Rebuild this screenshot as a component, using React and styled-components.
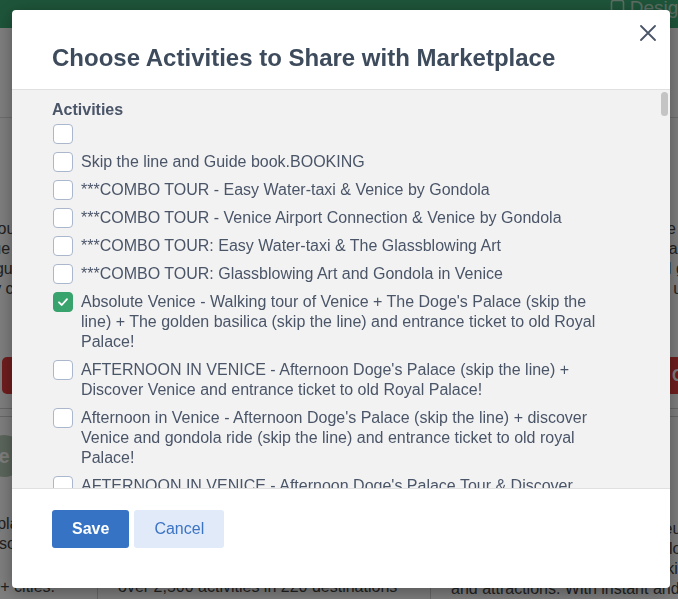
import React, { useState } from "react";
import styled, { createGlobalStyle } from "styled-components";

const GlobalStyle = createGlobalStyle`
  html, body {
    margin: 0;
    padding: 0;
    height: 599px;
    overflow: hidden;
    background: #ffffff;
    font-family: "Liberation Sans", Arial, Helvetica, sans-serif;
  }
  * { box-sizing: border-box; }
`;

/* ---------- page behind the modal ---------- */

const Page = styled.div`
  width: 678px;
  height: 599px;
  overflow: hidden;
  background: #ffffff;
`;

const TopBar = styled.header`
  height: 28px;
  background: #3caa74;
  display: flex;
  justify-content: flex-end;
  align-items: flex-start;
  overflow: hidden;
`;

const TopLink = styled.a`
  display: flex;
  align-items: center;
  gap: 4px;
  color: #b9dcc8;
  font-size: 19px;
  line-height: 20px;
  white-space: nowrap;
  margin-right: -70px;
  margin-top: -2px;
`;

const Hero = styled.div`
  height: 90px;
  border-bottom: 1px solid #dcdcdc;
`;

const CardRow = styled.div`
  display: grid;
  grid-template-columns: 297px 333px 400px;
  margin-left: -200px;
  height: 291px;
  border-bottom: 1px solid #d0d0d0;
`;

const Card = styled.div`
  display: flex;
  flex-direction: column;
  padding: ${(p) => (p.$first ? "24px 7px 14px 202px" : "24px 20px 14px 20px")};
  color: #333;
`;

const CardTitle = styled.div`
  font-size: 20px;
  font-weight: bold;
  margin-bottom: 54px;
  margin-left: ${(p) => p.$shift || 0}px;
`;

const CardText = styled.p`
  margin: 0;
  font-size: 16px;
  line-height: 20px;
  color: #444;
  margin-left: ${(p) => p.$shift || 0}px;
`;

const RedButton = styled.div`
  margin-top: auto;
  height: 37px;
  border-radius: 5px;
  background: #e23c3c;
  color: #fff;
  font-size: 16px;
  font-weight: bold;
  display: flex;
  align-items: center;
  padding-left: ${(p) => (p.$right ? "222px" : "12px")};
`;

const Gap = styled.div`
  height: 8px;
  border-bottom: 1px solid #d0d0d0;
`;

const FeatureRow = styled.div`
  display: grid;
  grid-template-columns: 297px 333px 400px;
  margin-left: -200px;
  height: 200px;
`;

const Feature = styled.div`
  display: flex;
  flex-direction: column;
  align-items: ${(p) => (p.$first ? "flex-end" : "flex-start")};
  padding: ${(p) => (p.$first ? "18px 42px 0 0" : "18px 20px 0 20px")};
  border-left: ${(p) => (p.$first ? "none" : "1px solid #d0d0d0")};
  color: #444;
  font-size: 16px;
  line-height: 20px;
`;

const Avatar = styled.div`
  width: 42px;
  height: 42px;
  border-radius: 50%;
  background: #b6ccb8;
  margin-right: ${(p) => p.$right || 0}px;
  margin-bottom: ${(p) => p.$gap || 37}px;
  display: flex;
  align-items: center;
  justify-content: center;
  color: #fff;
  font-weight: bold;
  font-size: 20px;
`;

const FeatureText = styled.p`
  margin: 0;
  margin-top: ${(p) => p.$top || 0}px;
  white-space: nowrap;
`;

/* ---------- modal ---------- */

const Backdrop = styled.div`
  position: fixed;
  inset: 0;
  background: rgba(0, 0, 0, 0.5);
`;

const Modal = styled.div`
  position: fixed;
  top: 10px;
  left: 12px;
  width: 658px;
  height: 578px;
  background: #ffffff;
  border-radius: 4px;
  box-shadow: 0 4px 18px rgba(0, 0, 0, 0.35);
  display: flex;
  flex-direction: column;
  overflow: hidden;
`;

const ModalHeader = styled.div`
  padding: 34px 40px 17px 40px;
`;

const Title = styled.h2`
  margin: 0;
  font-size: 24px;
  line-height: 28px;
  font-weight: bold;
  color: #3d4b5c;
`;

const CloseButton = styled.button`
  position: absolute;
  top: 15px;
  right: 14px;
  width: 16px;
  height: 16px;
  padding: 0;
  border: none;
  background: none;
  cursor: pointer;
  display: flex;
`;

const BodyWrap = styled.div`
  position: relative;
  height: 400px;
  border-top: 1px solid #e0e0e0;
  border-bottom: 1px solid #e0e0e0;
  background: #f2f2f2;
`;

const ModalBody = styled.div`
  height: 100%;
  overflow-y: scroll;
  scrollbar-width: none;
  padding: 10px 52px 10px 40px;

  &::-webkit-scrollbar {
    display: none;
  }
`;

const ScrollThumb = styled.div`
  position: absolute;
  top: 2px;
  right: 2px;
  width: 7px;
  height: 24px;
  border-radius: 4px;
  background: #c4c4c4;
`;

const Label = styled.div`
  font-size: 16px;
  line-height: 20px;
  font-weight: bold;
  color: #4a5568;
  margin-bottom: 4px;
`;

const List = styled.div`
  display: flex;
  flex-direction: column;
  gap: 8px;
`;

const Row = styled.label`
  display: flex;
  align-items: flex-start;
  gap: 8px;
  cursor: pointer;
`;

const Box = styled.span`
  flex: 0 0 20px;
  width: 20px;
  height: 20px;
  margin-left: 1px;
  border-radius: 4px;
  border: 1px solid ${(p) => (p.$checked ? "#38a36c" : "#aab7cc")};
  background: ${(p) => (p.$checked ? "#38a36c" : "#ffffff")};
  display: flex;
  align-items: center;
  justify-content: center;
`;

const RowText = styled.span`
  font-size: 16px;
  line-height: 20px;
  color: #4a5568;
`;

const Footer = styled.div`
  flex: 1;
  display: flex;
  align-items: flex-start;
  gap: 5px;
  padding: 21px 40px 0 40px;
`;

const Button = styled.button`
  height: 38px;
  padding: 0 ${(p) => (p.$primary ? "20px" : "20px")};
  border: none;
  border-radius: 3px;
  font-family: "Liberation Sans", Arial, Helvetica, sans-serif;
  font-size: 16px;
  font-weight: ${(p) => (p.$primary ? "bold" : "normal")};
  background: ${(p) => (p.$primary ? "#3673c4" : "#e1eaf8")};
  color: ${(p) => (p.$primary ? "#ffffff" : "#3b74c4")};
  cursor: pointer;
`;

const shown = [
  "",
  "Skip the line and Guide book.BOOKING",
  "***COMBO TOUR - Easy Water-taxi & Venice by Gondola",
  "***COMBO TOUR - Venice Airport Connection & Venice by Gondola",
  "***COMBO TOUR: Easy Water-taxi & The Glassblowing Art",
  "***COMBO TOUR: Glassblowing Art and Gondola in Venice",
  "Absolute Venice - Walking tour of Venice + The Doge's Palace (skip the line) + The golden basilica (skip the line) and entrance ticket to old Royal Palace!",
  "AFTERNOON IN VENICE - Afternoon Doge's Palace (skip the line) + Discover Venice and entrance ticket to old Royal Palace!",
  "Afternoon in Venice - Afternoon Doge's Palace (skip the line) + discover Venice and gondola ride (skip the line) and entrance ticket to old royal Palace!",
  "AFTERNOON IN VENICE - Afternoon Doge's Palace Tour & Discover Venice and Gondola ride",
];

const places = ["Burano", "Murano", "Torcello", "Lido", "Rialto", "San Marco", "Cannaregio", "Dorsoduro", "Castello", "Giudecca"];
const kinds = [
  "Boat trip to",
  "Private walking tour of",
  "Food and wine tasting in",
  "Evening gondola serenade near",
  "Photo tour of",
  "Hidden gems of",
  "Morning market visit in",
  "Masks and carnival workshop in",
  "Sunset cruise around",
  "Legends and ghosts of",
];

const extra = [];
kinds.forEach((k) => {
  places.forEach((p) => {
    extra.push(`${k} ${p} - guided experience with local expert`);
  });
});

const activities = [...shown, ...extra];

const Check = () => (
  <svg width="12" height="12" viewBox="0 0 12 12" fill="none">
    <path d="M2 6.3 L4.8 9 L10 3.2" stroke="#fff" strokeWidth="1.8" strokeLinecap="round" strokeLinejoin="round" />
  </svg>
);

export default function App() {
  const [checked, setChecked] = useState({ 6: true });

  const toggle = (i) => setChecked((c) => ({ ...c, [i]: !c[i] }));

  return (
    <>
      <GlobalStyle />
      <Page>
        <TopBar>
          <TopLink>
            <svg width="16" height="18" viewBox="0 0 16 18" fill="none">
              <rect x="1.5" y="1.5" width="12" height="14" rx="2" stroke="#b9dcc8" strokeWidth="1.6" />
            </svg>
            Design Studio
          </TopLink>
        </TopBar>
        <Hero />
        <CardRow>
          <Card $first>
            <CardTitle $shift={-160}>Activities</CardTitle>
            <CardText $shift={-40}>Sell tours and unique activities with guides in every city</CardText>
            <RedButton>Connect</RedButton>
          </Card>
          <Card>
            <CardTitle>Marketplace</CardTitle>
            <CardText>Share your activities with resellers and reach new customers in every destination.</CardText>
            <RedButton>Connect</RedButton>
          </Card>
          <Card>
            <CardTitle>Channels</CardTitle>
            <CardText>
              Connect your calendar to online travel agencies and resellers, sell tickets and passes, manage every
              booking in one place and grow your business with daily reports and useful tools for your team
            </CardText>
            <RedButton $right>Connect</RedButton>
          </Card>
        </CardRow>
        <Gap />
        <FeatureRow>
          <Feature $first>
            <Avatar $right={30}>e</Avatar>
            <FeatureText>the most popular platform</FeatureText>
            <FeatureText>brands with its resources</FeatureText>
            <FeatureText $top={23}>in over 1,000+ cities.</FeatureText>
          </Feature>
          <Feature>
            <Avatar>m</Avatar>
            <FeatureText>Marketplace lists</FeatureText>
            <FeatureText>experiences from partners</FeatureText>
            <FeatureText $top={23}>over 2,500 activities in 220 destinations</FeatureText>
          </Feature>
          <Feature>
            <Avatar $gap={42}>g</Avatar>
            <FeatureText>Book tours, activities and museum passes</FeatureText>
            <FeatureText>around the world with the best local guides</FeatureText>
            <FeatureText>and top experiences for every kind of traveler</FeatureText>
            <FeatureText>and attractions. With instant and</FeatureText>
          </Feature>
        </FeatureRow>
      </Page>

      <Backdrop />
      <Modal>
        <CloseButton aria-label="Close">
          <svg width="16" height="16" viewBox="0 0 16 16" fill="none">
            <path d="M1 1 L15 15 M15 1 L1 15" stroke="#4a5568" strokeWidth="1.8" strokeLinecap="round" />
          </svg>
        </CloseButton>
        <ModalHeader>
          <Title>Choose Activities to Share with Marketplace</Title>
        </ModalHeader>
        <BodyWrap>
          <ModalBody>
            <Label>Activities</Label>
            <List>
              {activities.map((name, i) => (
                <Row key={i} onClick={() => toggle(i)}>
                  <Box $checked={!!checked[i]}>{checked[i] && <Check />}</Box>
                  {name && <RowText>{name}</RowText>}
                </Row>
              ))}
            </List>
          </ModalBody>
          <ScrollThumb />
        </BodyWrap>
        <Footer>
          <Button $primary>Save</Button>
          <Button>Cancel</Button>
        </Footer>
      </Modal>
    </>
  );
}
